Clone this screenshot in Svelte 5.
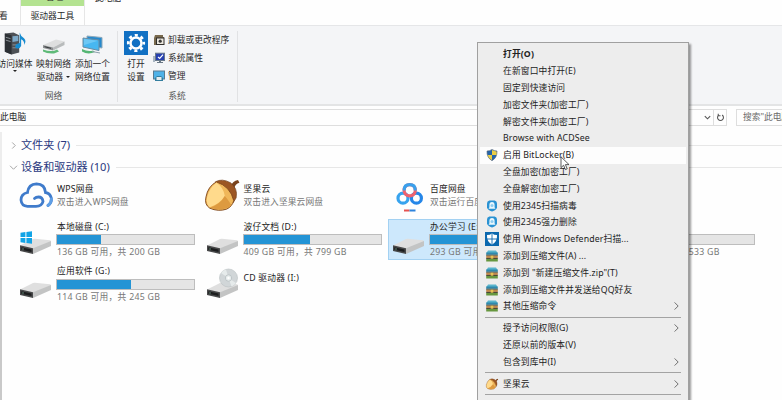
<script lang="ts">
  interface Tile {
    name: string;
    icon: "wps" | "nut" | "baidu" | "drive" | "windows" | "cd";
    note?: string;
    used?: number;
    selected?: boolean;
  }

  interface MenuItem {
    label: string;
    icon?: "shield" | "scan" | "defender" | "zip" | "nut";
    bold?: boolean;
    hover?: boolean;
    sub?: boolean;
  }

  const tiles: Tile[] = [
    { name: "WPS网盘", icon: "wps", note: "双击进入WPS网盘" },
    { name: "坚果云", icon: "nut", note: "双击进入坚果云网盘" },
    { name: "百度网盘", icon: "baidu", note: "双击运行百度网盘" },
    { name: "", icon: "drive" },
    { name: "本地磁盘 (C:)", icon: "windows", note: "136 GB 可用，共 200 GB", used: 32 },
    { name: "波仔文档 (D:)", icon: "drive", note: "409 GB 可用，共 799 GB", used: 48.5 },
    { name: "办公学习 (E:)", icon: "drive", note: "293 GB 可用", used: 51, selected: true },
    { name: "", icon: "drive", note: "310 GB 可用，共 533 GB", used: 42 },
    { name: "应用软件 (G:)", icon: "drive", note: "114 GB 可用，共 245 GB", used: 54 },
    { name: "CD 驱动器 (I:)", icon: "cd" },
  ];

  const menu: MenuItem[][] = [
    [
      { label: "打开(O)", bold: true },
      { label: "在新窗口中打开(E)" },
      { label: "固定到快速访问" },
      { label: "加密文件夹(加密工厂)" },
      { label: "解密文件夹(加密工厂)" },
      { label: "Browse with ACDSee" },
      { label: "启用 BitLocker(B)", icon: "shield", hover: true },
      { label: "全盘加密(加密工厂)" },
      { label: "全盘解密(加密工厂)" },
      { label: "使用2345扫描病毒", icon: "scan" },
      { label: "使用2345强力删除", icon: "scan" },
      { label: "使用 Windows Defender扫描...", icon: "defender" },
      { label: "添加到压缩文件(A) ...", icon: "zip" },
      { label: '添加到 "新建压缩文件.zip"(T)', icon: "zip" },
      { label: "添加到压缩文件并发送给QQ好友", icon: "zip" },
      { label: "其他压缩命令", icon: "zip", sub: true },
    ],
    [
      { label: "授予访问权限(G)", sub: true },
      { label: "还原以前的版本(V)" },
      { label: "包含到库中(I)", sub: true },
    ],
    [{ label: "坚果云", icon: "nut", sub: true }],
    [{ label: "", sub: true }],
  ];
</script>

{#snippet nut()}
  <svg viewBox="0 0 36 34">
    <path d="M28 7 Q29 2 35 1 L36.500 4 Q32 5 31 10z" fill="#7a431d" />
    <path d="M11 3 Q18-1 27 4 Q35 10 33 20 L30 25z" fill="#9c5623" stroke="#71401d" stroke-width=".8" />
    <path d="M12 3 Q3 8 1 19 Q-1 27 5 31 Q14 35 23 32 Q29 29 30.500 23 Q27 8 12 3z" fill="#f0b75a" stroke="#7f481c" />
    <path d="M12 4 Q4 10 2 20 Q1 27 5 30 Q16 26 21 18 Q19 8 12 4z" fill="#ffda8c" />
    <path d="M5 30.500 Q16 27 21 18 Q26 24 28 28 Q20 35 5 30.500z" fill="#dd9a40" />
  </svg>
{/snippet}

{#snippet drive()}
  <path d="M1 21.500 L14 15 Q15 14.700 16 14.800 L31 16.300 Q32 16.500 32 17.500 L14 25z" fill="#dfdfdf" />
  <path d="M14 24.300 L32 17 V22 L14 30z" fill="#c3c4c4" />
  <path d="M1 21.300 L14 24.200 V30 L1 27z" fill="#48494a" />
  <path d="M2.300 23.300 L12.500 25.600 V28 L2.300 25.800z" fill="#1c1d1e" />
  <circle cx="4" cy="25" r=".7" fill="#7aa891" />
{/snippet}

{#snippet tileIcon(kind: string)}
  {#if kind === "wps"}
    <svg viewBox="0 0 34 34" fill="none" stroke-width="2.800" stroke-linecap="round">
      <path d="M29 26.500 Q33 24 32.300 19 Q31 14 26.500 13.500 Q26 5 17.500 4.800 Q9.500 5 8.500 13.500 Q2 15 2 21 Q2.500 27 8.500 27.300 H17 Q23 27 24 22.500 Q23.500 18 19.500 18 Q17 18 15.500 19.500" stroke="#3f7bcb" />
      <path d="M29 26.500 Q32 24.500 32.300 20" stroke="#5f9fe6" />
    </svg>
  {:else if kind === "nut"}
    {@render nut()}
  {:else if kind === "baidu"}
    <svg viewBox="0 0 34 34" fill="none" stroke-width="3.2">
      <circle cx="11" cy="19.2" r="5" stroke="#37a3ee" />
      <circle cx="24.4" cy="19.2" r="5" stroke="#2586e8" />
      <circle cx="17.7" cy="11.3" r="5.6" stroke="#f0626e" />
      <path d="M12.1 11.500 Q12.1 5.7 17.7 5.7 Q23.3 5.7 23.3 11.500" stroke="#3aa0ec" />
      <path d="M12 31.500 H17.500" stroke="#e65350" stroke-width="2" />
      <path d="M17.500 31.500 H23.500" stroke="#2d83dd" stroke-width="2" />
    </svg>
  {:else}
    <svg viewBox="0 0 34 34">
      {@render drive()}
      {#if kind === "windows"}
        <path d="M1.5 8.8 L6.4 8.1 V13 H1.5z M7.4 8 L13 7.2 V13 H7.4z M1.5 14 H6.4 V19 L1.5 18.3z M7.4 14 H13 V19.8 L7.4 19.1z" fill="#12a4e6" />
      {:else if kind === "cd"}
        <circle cx="22.5" cy="10" r="9" fill="#d1d6d8" stroke="#b9bfc1" stroke-width=".6" />
        <path d="M22.5 10 L15 5 A9 9 0 0 1 20 1.500z M22.5 10 L30 15 A9 9 0 0 1 25.5 18.500z" fill="#e6ebeb" />
        <circle cx="22.5" cy="10" r="3.2" fill="#e8eded" stroke="#b0b9bb" stroke-width=".7" />
        <circle cx="22.5" cy="10" r="1.2" fill="#fff" />
      {/if}
    </svg>
  {/if}
{/snippet}

{#snippet menuIcon(kind?: string)}
  {#if kind === "shield"}
    <svg viewBox="0 0 12 12">
      <path d="M6 .5 Q8.5 2 11 2 Q11.4 8.5 6 11.7 Q.6 8.5 1 2 Q3.5 2 6 .5z" fill="#2464a9" stroke="#556270" stroke-width=".6" />
      <path d="M6 1 Q8.5 2.4 10.6 2.4 V6 H6z M6 6 V11.2 Q2 8.8 1.5 6z" fill="#e9cd45" />
    </svg>
  {:else if kind === "scan"}
    <svg viewBox="0 0 12 12">
      <path d="M3.4 .5 H8.6 Q11 1 11 3.500 V7.5 Q10.5 10 6 11.6 Q1.5 10 1 7.5 V3.500 Q1 1 3.4 .5z" fill="#2992d3" />
      <path d="M6 2 Q8.6 2 8.6 5 V7.3 L9.4 8.8 H2.6 L3.4 7.3 V5 Q3.4 2 6 2z" fill="#e9f7fd" />
      <circle cx="6" cy="5.6" r="1.5" fill="#8fcdf0" />
    </svg>
  {:else if kind === "defender"}
    <svg class="wide" viewBox="0 0 14 14">
      <rect width="14" height="14" fill="#0c68ae" />
      <path d="M7 1.5 Q9 3 12 3 Q12.5 9.5 7 12.6 Q1.5 9.5 2 3 Q5 3 7 1.5z" fill="#fff" />
      <path d="M7 2 V12 M2 7 H12" stroke="#0c68ae" stroke-width=".9" />
    </svg>
  {:else if kind === "zip"}
    <svg viewBox="0 0 12 12">
      <path d="M2 .5 H10 L11.6 3 H.4z" fill="#58b4cd" />
      <rect x=".2" y="2.5" width="11.6" height="2.2" fill="#2e89ad" />
      <rect x=".2" y="4.7" width="11.6" height="1" fill="#273c38" />
      <rect x=".2" y="5.7" width="11.6" height="2.2" fill="#c1874a" />
      <rect x=".2" y="7.9" width="11.6" height="1" fill="#332f20" />
      <rect x=".2" y="8.9" width="11.6" height="2.6" fill="#67973f" />
      <rect x="4.7" y="5.7" width="2.6" height="3" fill="#e5c456" />
    </svg>
  {:else if kind === "nut"}
    {@render nut()}
  {/if}
{/snippet}

<div class="window">
  <header class="tabs">
    <span class="view">看</span>
    <div class="tool-tab">
      <div class="context"><span>管理</span></div>
      <div class="tool">驱动器工具</div>
    </div>
    <span class="title">此电脑</span>
  </header>

  <div class="ribbon">
    <section class="group network">
      <div class="buttons">
        <div class="big media">
          <svg viewBox="0 0 24 24">
            <path d="M4 2 L13 1 L19 4 V22 L11 24 L4 21z" fill="#4d5156" />
            <path d="M4 2 L11 4 V24 L4 21z" fill="#2c3035" />
            <path d="M12 5 L18 4.5 V10 L12 11z" fill="#7da9c8" />
            <path d="M5 6 L10 7.5 M5 9 L10 10.5 M12 14 H18 M12 17 H18" stroke="#8c9298" />
            <path d="M19.500 1 Q20.500 5 24 7 Q27 10 24 14 Q25 10 21 8 V15 Q19 19 15 17 Q14 13 19.500 12z" fill="#168bd0" />
          </svg>
          <span>访问媒体</span>
          <i class="caret"></i>
        </div>
        <div class="big">
          <svg viewBox="0 0 24 24">
            <path d="M1 14 L14 8.500 L22.500 10.500 L11 16.500z" fill="#dedfdf" />
            <path d="M1 14 L11 16.500 V19.500 L1 17z" fill="#8d9092" />
            <path d="M11 16.500 L22.500 10.500 V14 L11 19.500z" fill="#b8bbbc" />
            <path d="M2.500 15.700 L9 17.300" stroke="#363b3d" />
            <path d="M1 18.500 Q8 21 13 19.500 L15 18.500 L17 20.500 L12 22.500 Q5 23 1 20.500z" fill="#5fba78" />
          </svg>
          <span>映射网络</span>
          <span>驱动器 <i class="caret inline"></i></span>
        </div>
        <div class="big">
          <svg viewBox="0 0 24 24">
            <path d="M6 5 L21 6.5 V17 L6 15z" fill="#2589cd" stroke="#8da9bb" />
            <path d="M2 7 L18 9 V19.5 L2 16z" fill="#47b7f1" stroke="#688ba2" />
            <path d="M3 8 L17 9.7 L3 14z" fill="#6ec8f5" />
            <path d="M1 18 Q7 21 12 19.500 L14 21 Q7 24 1 20.500z" fill="#55b674" />
            <path d="M11 20.500 L19 22" stroke="#8d9fab" />
          </svg>
          <span>添加一个</span>
          <span>网络位置</span>
        </div>
      </div>
      <footer>网络</footer>
    </section>

    <section class="group system">
      <div class="buttons">
        <div class="big settings">
          <svg viewBox="0 0 24 24">
            <rect width="24" height="24" fill="#1170c3" />
            <circle cx="12" cy="12" r="7.8" fill="none" stroke="#fff" stroke-width="2.6" stroke-dasharray="3.1 3.026" stroke-dashoffset="1.5" />
            <circle cx="12" cy="12" r="5.5" fill="none" stroke="#fff" stroke-width="2.5" />
          </svg>
          <span>打开</span>
          <span>设置</span>
        </div>
        <div class="small-list">
          <div class="small">
            <svg viewBox="0 0 12 12">
              <path d="M2 1 H10 V3 H11 V11 H1 V4z" fill="#78694d" />
              <rect x="3" y="3.5" width="8.5" height="7.5" fill="#302f2c" />
              <rect x="4" y="4.5" width="6.5" height="5.5" fill="#ece8df" />
              <circle cx="7.2" cy="7.2" r="1.6" fill="#373735" />
            </svg>
            <span>卸载或更改程序</span>
          </div>
          <div class="small">
            <svg viewBox="0 0 12 12">
              <path d="M0 4 H2 V10 H0z" fill="#aab6c2" />
              <rect x="2.5" y="1.2" width="9" height="7.3" fill="#2740b0" stroke="#68788a" />
              <path d="M5 5 L6.7 6.5 L10 2.7" fill="none" stroke="#fff" stroke-width="1.2" />
              <path d="M6 9 H8 V10 H10 V11 H4 V10 H6z" fill="#6a7885" />
            </svg>
            <span>系统属性</span>
          </div>
          <div class="small">
            <svg viewBox="0 0 12 12">
              <rect x=".5" y="1" width="11" height="8" fill="#4fb2e8" stroke="#587b91" />
              <path d="M2 8 L4 6 H8 L10 8 V11 H2z" fill="#337e9f" />
              <rect x="3.5" y="7" width="5" height="3" fill="#e5edf0" />
            </svg>
            <span>管理</span>
          </div>
        </div>
      </div>
      <footer>系统</footer>
    </section>
  </div>

  <div class="address">
    <div class="path">
      <span>此电脑</span>
      <div class="cell">
        <svg viewBox="0 0 10 10"><path d="M2 3.5 L5 6.5 L8 3.5" /></svg>
      </div>
      <div class="cell">
        <svg viewBox="0 0 10 10"><path d="M6.8 2.2 A3.3 3.3 0 1 1 3.2 2.2 M2.5 .8 V3 H5" /></svg>
      </div>
    </div>
    <div class="search">搜索"此电脑"</div>
  </div>

  <main>
    <h2 class="folders">
      <svg viewBox="0 0 8 8"><path d="M2.5 .5 L6 4 L2.5 7.5" /></svg>
      文件夹 (7)
    </h2>
    <h2>
      <svg viewBox="0 0 8 8"><path d="M0 2 L4 6 L8 2" /></svg>
      设备和驱动器 (10)
    </h2>
    <div class="tiles">
      {#each tiles as t}
        <div class="tile" class:selected={t.selected} class:blank={!t.name && !t.note}>
          <div class="icon {t.icon}">{@render tileIcon(t.icon)}</div>
          <div class="info" class:disk={t.used !== undefined}>
            <div class="name">{t.name}</div>
            {#if t.used !== undefined}
              <div class="bar"><div style="width: {t.used}%"></div></div>
            {/if}
            {#if t.note}
              <div class="note">{t.note}</div>
            {/if}
          </div>
        </div>
      {/each}
    </div>
  </main>

  <div class="scroll"></div>

  <div class="menu">
    {#each menu as group, i}
      {#if i > 0}<hr />{/if}
      {#each group as item}
        <div class="item" class:hover={item.hover} class:bold={item.bold}>
          <div class="mark">{@render menuIcon(item.icon)}</div>
          <span>{item.label}</span>
          {#if item.sub}
            <svg class="arrow" viewBox="0 0 6 10"><path d="M.7 .7 L5 5 L.7 9.3" /></svg>
          {/if}
        </div>
      {/each}
    {/each}
  </div>

  <svg class="cursor" viewBox="0 0 10 15">
    <path d="M1 .8 V11.6 L3.6 9.2 L5.4 13.6 L7.2 12.8 L5.4 8.6 H9z" fill="#fff" stroke="#333" stroke-width=".8" />
  </svg>
</div>

<style>
  :global(body) {
    margin: 0;
    overflow: hidden;
  }
  .window {
    position: relative;
    width: 782px;
    height: 400px;
    overflow: hidden;
    background: #fefefe;
    color: #292929;
    font-family: "Noto Sans", "Noto Sans CJK SC", sans-serif;
    font-size: 8.75px;
    line-height: 12px;
    white-space: nowrap;
  }
  svg {
    display: block;
    overflow: visible;
  }

  .tabs {
    display: flex;
    height: 25px;
  }
  .view {
    width: 20px;
    margin-top: 10px;
    margin-left: -1px;
    margin-right: 1px;
    flex: none;
  }
  .tool-tab {
    width: 65px;
    border-left: 1px solid #e6e6e6;
    border-right: 1px solid #e6e6e6;
    box-sizing: border-box;
    text-align: center;
  }
  .context {
    display: flex;
    justify-content: center;
    align-items: flex-end;
    height: 6px;
    background: #b4e391;
  }
  .context span {
    margin: 0 0 3px 4px;
  }
  .tool {
    margin-top: 4px;
  }
  .title {
    margin: -8px 0 0 10px;
  }

  .ribbon {
    display: flex;
    height: 81px;
    box-sizing: border-box;
    padding-top: 5px;
    background: #f4f5f7;
    border-top: 1px solid #e5e6e8;
    border-bottom: 2px solid #e3e4e5;
  }
  .group {
    display: flex;
    flex-direction: column;
    justify-content: space-between;
    height: 71px;
    border-right: 1px solid #e1e2e4;
    box-sizing: border-box;
  }
  .network {
    width: 118px;
  }
  .system {
    width: 120px;
  }
  .buttons {
    display: flex;
  }
  .big {
    display: flex;
    flex-direction: column;
    align-items: center;
    width: 39px;
    flex: none;
  }
  .big svg {
    width: 24px;
    height: 24px;
    margin-bottom: 3px;
  }
  .big span {
    line-height: 12.7px;
  }
  .media {
    margin-left: -4px;
    width: 38px;
  }
  .media svg {
    width: 23px;
    margin-right: 5px;
  }
  .media .caret {
    margin-top: -1px;
  }
  .settings {
    width: 34px;
    margin-left: 1px;
  }
  .caret {
    border: 2px solid transparent;
    border-top-color: #222;
    border-bottom: 0;
  }
  .caret.inline {
    display: inline-block;
    margin: 0 0 2px 1px;
  }
  .small-list {
    margin-top: 3px;
  }
  .small {
    display: flex;
    align-items: center;
    gap: 3px;
    height: 12px;
    margin-bottom: 6px;
  }
  .small svg {
    width: 12px;
    height: 12px;
  }
  .group footer {
    text-align: center;
    color: #555;
    padding-right: 1px;
    line-height: 11px;
  }
  .network footer {
    padding-left: 10px;
    padding-right: 20px;
  }

  .address {
    display: flex;
    gap: 9px;
    padding-top: 3px;
  }
  .path {
    display: flex;
    width: 727px;
    height: 17px;
    box-sizing: border-box;
    border: 1px solid #dedede;
    border-left: 0;
    line-height: 15px;
  }
  .path span {
    flex: 1;
  }
  .cell {
    display: flex;
    align-items: center;
    justify-content: center;
    width: 12px;
  }
  .cell + .cell {
    border-left: 1px solid #dedede;
  }
  .cell svg {
    width: 9px;
    height: 9px;
    fill: none;
    stroke: #555;
    stroke-width: 1.2;
  }
  .search {
    flex: 1;
    height: 17px;
    box-sizing: border-box;
    border: 1px solid #dedede;
    border-right: 0;
    padding-left: 6px;
    line-height: 15px;
    color: #6b6b6b;
    overflow: hidden;
  }

  main {
    padding: 12px 0 0 10px;
  }
  h2 {
    display: flex;
    align-items: center;
    height: 14px;
    margin: 0;
    font-size: 11.1px;
    font-weight: 400;
    color: #2a397f;
  }
  h2::after {
    content: "";
    flex: 1;
    height: 1px;
    margin-left: 6px;
    background: #e7e7e7;
  }
  h2 svg {
    width: 7px;
    height: 7px;
    margin-right: 4px;
    fill: none;
    stroke: #999;
  }
  .folders {
    margin-bottom: 8px;
  }
  .tiles {
    display: grid;
    grid-template-columns: repeat(4, 186.5px);
    grid-auto-rows: 41.5px;
    row-gap: 3.2px;
    margin-left: 5px;
  }
  .tile {
    display: flex;
    width: 184px;
    height: 41.5px;
    box-sizing: border-box;
    border: 1px solid transparent;
    padding-left: 3px;
  }
  .selected {
    background: #cde8fc;
    border-color: #a3d1f2;
  }
  .blank {
    visibility: hidden;
  }
  .icon {
    width: 38px;
    flex: none;
    padding-top: 4px;
  }
  .icon svg {
    width: 34px;
    height: 34px;
  }
  .nut svg {
    margin-left: -1px;
    height: 32px;
  }
  .info {
    padding-top: 8px;
  }
  .disk {
    padding-top: 1px;
  }
  .name {
    height: 13px;
    color: #222;
    letter-spacing: 0.2px;
  }
  .bar {
    width: 139px;
    height: 11px;
    margin: 0.5px 0 1px -1px;
    box-sizing: border-box;
    border: 1px solid #bdbdbd;
    background: #e5e5e5;
  }
  .bar div {
    height: 100%;
    background: #2494d5;
  }
  .note {
    color: #777;
    letter-spacing: 0.1px;
  }
  .disk .note {
    letter-spacing: 0.27px;
  }

  .scroll {
    position: absolute;
    left: 0;
    top: 132px;
    width: 2px;
    bottom: 0;
    background: linear-gradient(#ededed 88px, #c9c9c9 88px);
  }

  .menu {
    position: absolute;
    left: 477px;
    top: 42px;
    width: 212px;
    box-sizing: border-box;
    padding: 3px 2px;
    border: 1px solid #a0a0a0;
    background: #ededed;
    box-shadow: 2px 2px 2px rgba(0, 0, 0, 0.4);
  }
  .item {
    display: flex;
    align-items: center;
    height: 16.8px;
    color: #222;
    letter-spacing: 0.13px;
  }
  .hover {
    background: #fdfdfd;
  }
  .bold {
    font-weight: 700;
  }
  .mark {
    display: flex;
    justify-content: center;
    width: 23px;
    flex: none;
  }
  .mark svg {
    width: 12px;
    height: 12px;
  }
  .mark .wide {
    width: 14px;
    height: 14px;
  }
  .arrow {
    width: 5px;
    height: 10px;
    margin: 0 7px 0 auto;
    fill: none;
    stroke: #555;
  }
  hr {
    height: 1px;
    margin: 2.1px 5px;
    border: 0;
    background: #a3a3a3;
  }

  .cursor {
    position: absolute;
    left: 560px;
    top: 156px;
    width: 10px;
    height: 15px;
  }
</style>
